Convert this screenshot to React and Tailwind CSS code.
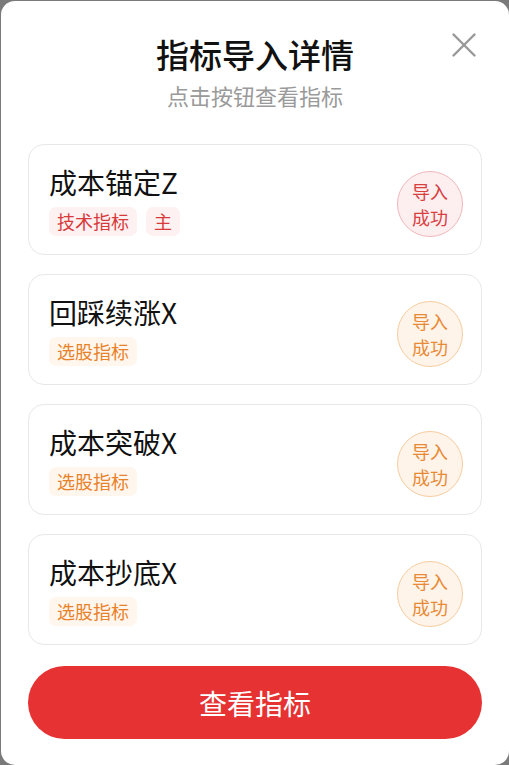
import { X } from 'lucide-react'

const items = [
  { name: '成本锚定Z', tags: ['技术指标', '主'], tone: 'red' },
  { name: '回踩续涨X', tags: ['选股指标'], tone: 'orange' },
  { name: '成本突破X', tags: ['选股指标'], tone: 'orange' },
  { name: '成本抄底X', tags: ['选股指标'], tone: 'orange' },
]

const tones = {
  red: {
    tag: 'bg-[#fdf1f1] text-[#d8393b]',
    badge: 'bg-[#fdeef0] border-[#f1b7ba] text-[#d8403f]',
  },
  orange: {
    tag: 'bg-[#fff6ee] text-[#e8822a]',
    badge: 'bg-[#fff4ea] border-[#f6cc9f] text-[#e88a35]',
  },
}

function IndicatorCard({ item }) {
  const t = tones[item.tone]
  return (
    <div className="flex h-[111px] items-center justify-between rounded-[16px] border border-[#e8e8e8] bg-white pl-5 pr-[18px]">
      <div className="flex flex-col gap-[7px]">
        <div className="text-[28px] leading-[36px] text-[#111]">{item.name}</div>
        <div className="flex gap-[9px]">
          {item.tags.map(tag => (
            <span key={tag} className={`rounded-[7px] px-2 text-[18px] leading-[29px] ${t.tag}`}>
              {tag}
            </span>
          ))}
        </div>
      </div>
      <div className={`mt-2 flex h-[66px] w-[66px] flex-col items-center justify-center rounded-full border text-[18px] leading-[26px] ${t.badge}`}>
        <span>导入</span>
        <span>成功</span>
      </div>
    </div>
  )
}

export default function App() {
  return (
    <div
      className="h-[765px] w-[509px] overflow-hidden bg-[#7a7a7a]"
      style={{ fontFamily: '"Noto Sans CJK SC", "Noto Sans", sans-serif' }}
    >
      <div className="ml-px mt-px flex h-[764px] w-[508px] flex-col rounded-[14px] bg-white px-[27px]">
        {/* Header */}
        <div className="relative flex flex-col items-center pt-[33px]">
          <h1 className="text-[33px] font-medium leading-[40px] text-[#111]">指标导入详情</h1>
          <p className="mt-[6px] text-[22px] leading-[30px] text-[#9a9a9a]">点击按钮查看指标</p>
          <button className="absolute right-[-3px] top-[23px] text-[#999]">
            <X size={42} strokeWidth={1.4} />
          </button>
        </div>

        {/* Cards */}
        <div className="mt-[34px] flex flex-col gap-[19px]">
          {items.map(item => (
            <IndicatorCard key={item.name} item={item} />
          ))}
        </div>

        <button className="mt-[21px] h-[73px] w-full rounded-full bg-[#e63232] text-[28px] text-white">
          查看指标
        </button>
      </div>
    </div>
  )
}
